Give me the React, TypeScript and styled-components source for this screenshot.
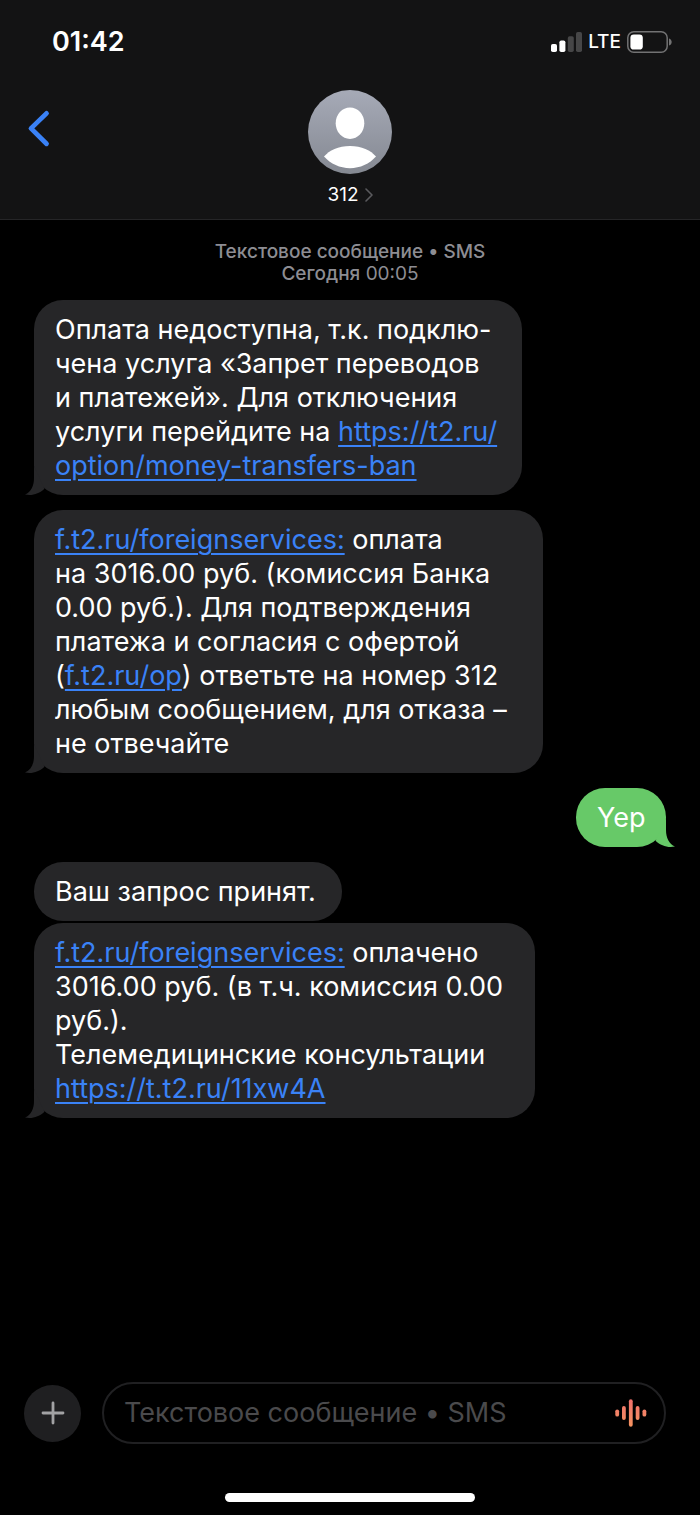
import React from "react";
import styled, { createGlobalStyle } from "styled-components";

const GlobalStyle = createGlobalStyle`
  * { box-sizing: border-box; }
  body {
    margin: 0;
    background: #000;
    color: #fff;
    font-family: Inter, "Noto Sans", sans-serif;
  }
  button, input { font: inherit; color: inherit; }
`;

const Screen = styled.div`
  display: flex;
  flex-direction: column;
  min-height: 100vh;
`;

const Header = styled.header`
  background: #131314;
  border-bottom: 1px solid #252527;
`;

const StatusBar = styled.div`
  display: flex;
  align-items: center;
  justify-content: space-between;
  height: 84px;
  padding: 0 28px 0 52px;
`;

const Clock = styled.time`
  font-size: 27px;
  line-height: 34px;
  font-weight: 600;
`;

const StatusIcons = styled.div`
  display: flex;
  align-items: center;
  gap: 6px;
`;

const Network = styled.span`
  font-size: 19px;
  line-height: 22px;
  font-weight: 500;
`;

const Nav = styled.div`
  display: grid;
  grid-template-columns: 84px 1fr 84px;
  align-items: start;
  padding: 6px 0 13px;
`;

const BackButton = styled.button`
  display: flex;
  margin: 18px 0 0 24px;
  padding: 0;
  width: 40px;
  height: 42px;
  align-items: center;
  border: 0;
  background: none;
`;

const Contact = styled.button`
  display: flex;
  flex-direction: column;
  align-items: center;
  justify-self: center;
  gap: 10px;
  padding: 0;
  border: 0;
  background: none;
`;

const ContactName = styled.span`
  display: flex;
  align-items: center;
  gap: 6px;
  font-size: 19px;
  line-height: 22px;
`;

const Thread = styled.main`
  display: flex;
  flex: 1;
  flex-direction: column;
  padding: 21px 34px;
`;

const Stamp = styled.p`
  margin: 0 0 15px;
  color: #8d8d93;
  font-size: 19px;
  line-height: 22px;
  text-align: center;

  strong { font-weight: 500; }
`;

const Bubble = styled.div<{ $sent?: boolean; $joined?: boolean; $minWidth?: number }>`
  position: relative;
  align-self: ${(p) => (p.$sent ? "flex-end" : "flex-start")};
  min-width: ${(p) => p.$minWidth ?? 90}px;
  margin-bottom: ${(p) => (p.$joined ? 2 : 15)}px;
  padding: 13px 20px 12px 21px;
  border-radius: 29px;
  background: ${(p) => (p.$sent ? "#67c968" : "#262628")};
  color: #fff;
  font-size: 27px;
  line-height: 34px;
`;

const TailShape = styled.svg<{ $sent?: boolean }>`
  position: absolute;
  bottom: 0;
  ${(p) => (p.$sent ? "right: -9px; transform: scaleX(-1);" : "left: -9px;")}
  fill: ${(p) => (p.$sent ? "#67c968" : "#262628")};
`;

const Link = styled.a`
  color: #3a82f7;
  text-decoration: underline;
  text-decoration-thickness: 2px;
  text-underline-offset: 4px;
`;

const Composer = styled.form`
  display: flex;
  align-items: center;
  gap: 21px;
  padding: 0 34px 0 24px;
`;

const AddButton = styled.button`
  display: flex;
  flex: none;
  align-items: center;
  justify-content: center;
  width: 57px;
  height: 57px;
  padding: 0;
  border: 0;
  border-radius: 50%;
  background: #1f1f21;
`;

const Field = styled.div`
  display: flex;
  flex: 1;
  align-items: center;
  min-width: 0;
  height: 62px;
  padding: 0 17px 0 20px;
  border: 2px solid #202022;
  border-radius: 31px;
`;

const MessageInput = styled.input`
  flex: 1;
  min-width: 0;
  padding: 0;
  border: 0;
  outline: 0;
  background: none;
  font-size: 27px;
  line-height: 34px;

  &::placeholder { color: #4a4a4c; opacity: 1; }
`;

const VoiceButton = styled.button`
  display: flex;
  padding: 0;
  border: 0;
  background: none;
`;

const HomeIndicator = styled.div`
  width: 250px;
  height: 9px;
  margin: 49px auto 13px;
  border-radius: 5px;
  background: #fff;
`;

const Tail = ({ sent }: { sent?: boolean }) => (
  <TailShape $sent={sent} width="20" height="29" viewBox="0 0 20 29" aria-hidden="true">
    <path d="M9 0V12C9 20 6 26 0 28.6C8 30 14 27.5 19.5 22.7Z" />
  </TailShape>
);

const SignalIcon = () => (
  <svg width="31" height="20" viewBox="0 0 31 20" aria-hidden="true">
    <rect x="0" y="12" width="6" height="8" rx="1.8" fill="#fff" />
    <rect x="8.4" y="8.4" width="6" height="11.6" rx="1.8" fill="#fff" />
    <rect x="16.8" y="4.3" width="6" height="15.7" rx="1.8" fill="#464647" />
    <rect x="25" y="0" width="6" height="20" rx="1.8" fill="#464647" />
  </svg>
);

const BatteryIcon = () => (
  <svg width="45" height="22" viewBox="0 0 45 22" aria-hidden="true">
    <rect x="0.8" y="0.8" width="39.4" height="20.4" rx="6" fill="none" stroke="#727273" strokeWidth="1.5" />
    <rect x="3.4" y="3.4" width="12.4" height="15.2" rx="3.4" fill="#fff" />
    <path d="M42 7.4c3.6 1.2 3.6 6 0 7.2z" fill="#727273" />
  </svg>
);

const Avatar = () => (
  <svg width="84" height="84" viewBox="0 0 84 84" aria-hidden="true">
    <defs>
      <linearGradient id="avatar" x1="0" y1="0" x2="0" y2="1">
        <stop offset="0" stopColor="#a6aab7" />
        <stop offset="1" stopColor="#858992" />
      </linearGradient>
    </defs>
    <circle cx="42" cy="42" r="42" fill="url(#avatar)" />
    <ellipse cx="42" cy="33.2" rx="14.3" ry="15.8" fill="#fff" />
    <path d="M16 66.6C21 60.5 30.5 56 42 56s21 4.5 26 10.6C61.5 74 52 78.2 42 78.2S22.5 74 16 66.6Z" fill="#fff" />
  </svg>
);

export default function App() {
  return (
    <Screen>
      <GlobalStyle />
      <Header>
        <StatusBar>
          <Clock>01:42</Clock>
          <StatusIcons>
            <SignalIcon />
            <Network>LTE</Network>
            <BatteryIcon />
          </StatusIcons>
        </StatusBar>
        <Nav>
          <BackButton type="button" aria-label="Назад">
            <svg width="30" height="40" viewBox="0 0 30 40" aria-hidden="true">
              <path d="M22.5 4.4L7 19.4L22.5 34.7" fill="none" stroke="#3a82f7" strokeWidth="4.8" strokeLinecap="round" strokeLinejoin="round" />
            </svg>
          </BackButton>
          <Contact type="button">
            <Avatar />
            <ContactName>
              312
              <svg width="8" height="14" viewBox="0 0 8 14" aria-hidden="true">
                <path d="M1 1L7 7L1 13" fill="none" stroke="#5a5a5e" strokeWidth="1.6" strokeLinecap="round" strokeLinejoin="round" />
              </svg>
            </ContactName>
          </Contact>
        </Nav>
      </Header>

      <Thread>
        <Stamp>
          <strong>Текстовое сообщение • SMS</strong>
          <br />
          <strong>Сегодня</strong> 00:05
        </Stamp>
        <Bubble $minWidth={488}>
          Оплата недоступна, т.к. подклю-<br />
          чена услуга «Запрет переводов<br />
          и платежей». Для отключения<br />
          услуги перейдите на{" "}
          <Link href="https://t2.ru/option/money-transfers-ban">
            https://t2.ru/<br />
            option/money-transfers-ban
          </Link>
          <Tail />
        </Bubble>
        <Bubble $minWidth={509}>
          <Link href="https://f.t2.ru/foreignservices:">f.t2.ru/foreignservices:</Link> оплата<br />
          на 3016.00 руб. (комиссия Банка<br />
          0.00 руб.). Для подтверждения<br />
          платежа и согласия с офертой<br />
          (<Link href="https://f.t2.ru/op">f.t2.ru/op</Link>) ответьте на номер 312<br />
          любым сообщением, для отказа –<br />
          не отвечайте
          <Tail />
        </Bubble>
        <Bubble $sent>
          Yep
          <Tail sent />
        </Bubble>
        <Bubble $joined $minWidth={308}>Ваш запрос принят.</Bubble>
        <Bubble $minWidth={501}>
          <Link href="https://f.t2.ru/foreignservices:">f.t2.ru/foreignservices:</Link> оплачено<br />
          3016.00 руб. (в т.ч. комиссия 0.00<br />
          руб.).<br />
          Телемедицинские консультации<br />
          <Link href="https://t.t2.ru/11xw4A">https://t.t2.ru/11xw4A</Link>
          <Tail />
        </Bubble>
      </Thread>

      <Composer onSubmit={(e) => e.preventDefault()}>
        <AddButton type="button" aria-label="Добавить">
          <svg width="24" height="24" viewBox="0 0 24 24" aria-hidden="true">
            <path d="M12 2V22M2 12H22" stroke="#a2a2a4" strokeWidth="2.8" strokeLinecap="round" />
          </svg>
        </AddButton>
        <Field>
          <MessageInput type="text" aria-label="Сообщение" placeholder="Текстовое сообщение • SMS" />
          <VoiceButton type="button" aria-label="Голосовой ввод">
            <svg width="32" height="28" viewBox="0 0 32 28" aria-hidden="true">
              <defs>
                <linearGradient id="voice" gradientUnits="userSpaceOnUse" x1="0" y1="0" x2="0" y2="28">
                  <stop offset="0" stopColor="#f0706c" />
                  <stop offset="1" stopColor="#f59460" />
                </linearGradient>
              </defs>
              <g fill="url(#voice)">
                <rect x="0.3" y="10.4" width="3.8" height="7.2" rx="1.9" />
                <rect x="7" y="7" width="3.8" height="14" rx="1.9" />
                <rect x="13.9" y="0.3" width="3.8" height="27.4" rx="1.9" />
                <rect x="20.7" y="7" width="3.8" height="14" rx="1.9" />
                <rect x="27.5" y="10.4" width="3.8" height="7.2" rx="1.9" />
              </g>
            </svg>
          </VoiceButton>
        </Field>
      </Composer>
      <HomeIndicator />
    </Screen>
  );
}
